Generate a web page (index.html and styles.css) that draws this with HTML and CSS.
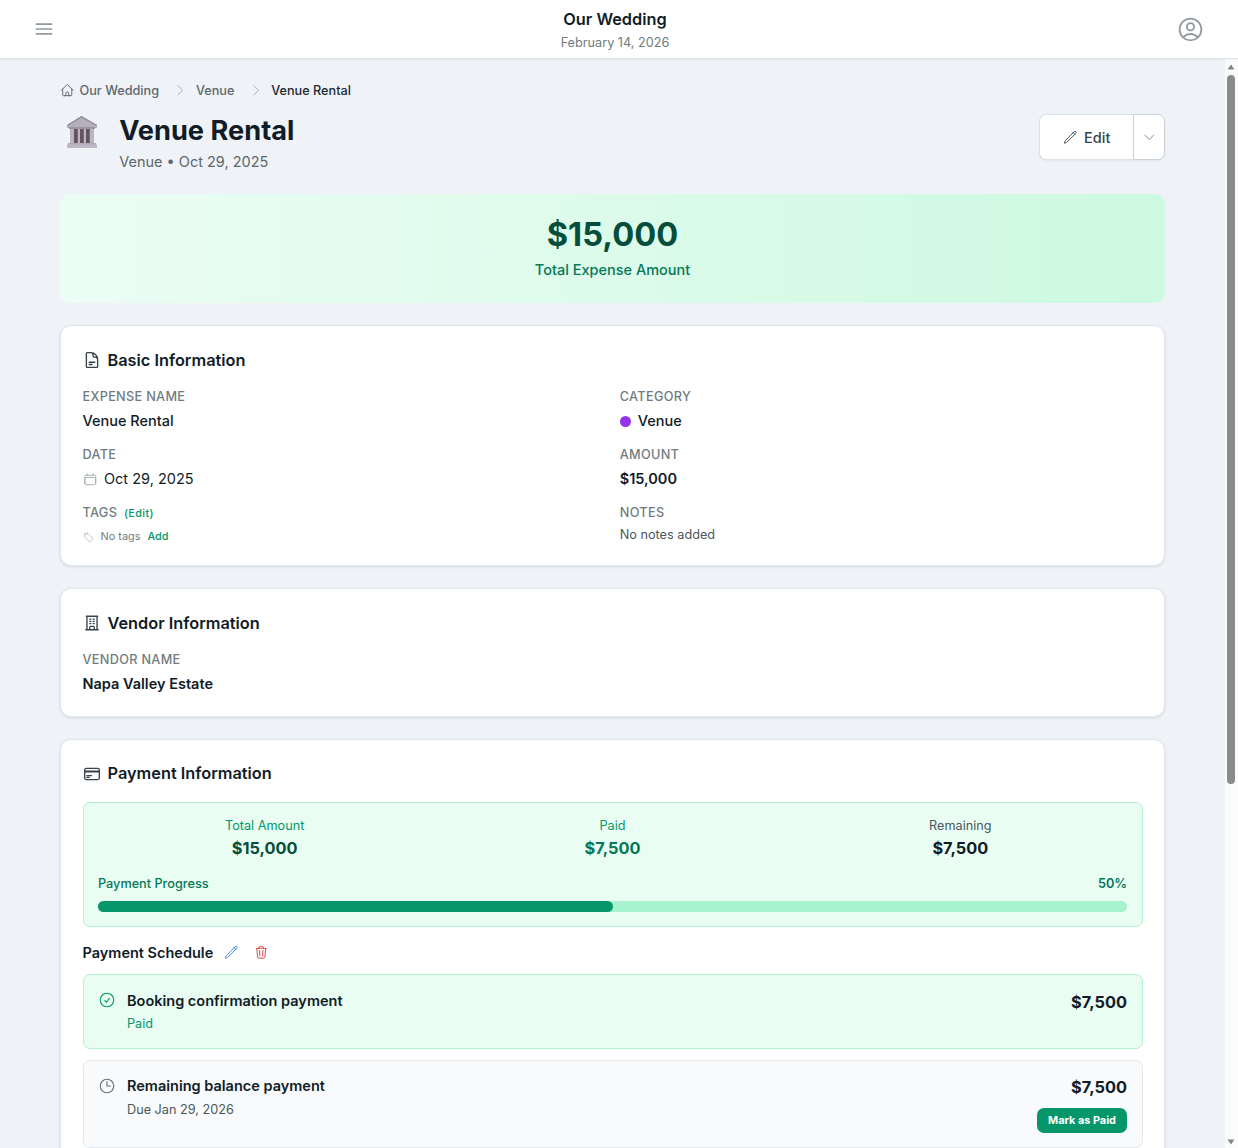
FILE: index.html
```html
<!DOCTYPE html>
<html lang="en">
<head>
    <meta charset="UTF-8">
    <meta name="viewport" content="width=device-width, initial-scale=1.0">
    <title>Venue Rental - Our Wedding</title>
    <link rel="stylesheet" href="styles.css">
</head>
<body>

<header class="topbar">
    <button class="menu-button" aria-label="Menu">
        <svg class="icon" viewBox="0 0 24 24"><path d="M3.75 6.75h16.5M3.75 12h16.5m-16.5 5.25h16.5"/></svg>
    </button>
    <div class="topbar-title">
        <div class="event-name">Our Wedding</div>
        <div class="event-date">February 14, 2026</div>
    </div>
    <button class="user-button" aria-label="Account">
        <svg class="icon" viewBox="0 0 24 24"><path d="M17.982 18.725A7.488 7.488 0 0 0 12 15.75a7.488 7.488 0 0 0-5.982 2.975m11.963 0a9 9 0 1 0-11.963 0m11.963 0A8.966 8.966 0 0 1 12 21a8.966 8.966 0 0 1-5.982-2.275M15 9.75a3 3 0 1 1-6 0 3 3 0 0 1 6 0Z"/></svg>
    </button>
</header>

<div class="layout">
    <main class="content">
        <nav class="breadcrumb">
            <svg class="icon home" viewBox="0 0 24 24"><path d="m2.25 12 8.954-8.955c.44-.439 1.152-.439 1.591 0L21.75 12M4.5 9.75v10.125c0 .621.504 1.125 1.125 1.125H9.75v-4.875c0-.621.504-1.125 1.125-1.125h2.25c.621 0 1.125.504 1.125 1.125V21h4.125c.621 0 1.125-.504 1.125-1.125V9.75M8.25 21h8.25"/></svg>
            <a>Our Wedding</a>
            <svg class="icon chevron" viewBox="0 0 24 24"><path d="m8.25 4.5 7.5 7.5-7.5 7.5"/></svg>
            <a>Venue</a>
            <svg class="icon chevron" viewBox="0 0 24 24"><path d="m8.25 4.5 7.5 7.5-7.5 7.5"/></svg>
            <span class="current">Venue Rental</span>
        </nav>

        <div class="page-header">
            <svg class="category-icon" viewBox="0 0 32 34">
                <path fill="#b5b0bc" d="M1 10 15.5 1 31 10v3H1z"/>
                <path fill="#8f8896" d="M1 10 15.5 1 31 10l-1 .8L15.5 2.6 2 10.8z"/>
                <path fill="#9c95a4" d="M3 12h26v2H3z"/>
                <path fill="#8c8292" d="M4 14h24v15H4z"/>
                <path fill="#65535f" d="M8 14h3.5v15H8zM14 14h3.5v15H14zM20 14h3.5v15H20z"/>
                <path fill="#bbb5c3" d="M4 14h4v15H4zM12 14h2v15h-2zM18 14h2v15h-2zM24 14h4v15h-4z"/>
                <path fill="#b0aab8" d="M2 28h28v2H2z"/>
                <path fill="#bdb8c4" d="M1 29.5h30V33H1z"/>
            </svg>
            <div class="page-heading">
                <h1>Venue Rental</h1>
                <p>Venue • Oct 29, 2025</p>
            </div>
            <div class="button-group">
                <button class="edit-button">
                    <svg class="icon" viewBox="0 0 24 24"><path d="m16.862 4.487 1.687-1.688a1.875 1.875 0 1 1 2.652 2.652L6.832 19.82a4.5 4.5 0 0 1-1.897 1.13l-2.685.8.8-2.685a4.5 4.5 0 0 1 1.13-1.897L16.863 4.487Zm0 0L19.5 7.125"/></svg>
                    Edit
                </button>
                <button class="more-button" aria-label="More actions">
                    <svg class="icon" viewBox="0 0 24 24"><path d="m19.5 8.25-7.5 7.5-7.5-7.5"/></svg>
                </button>
            </div>
        </div>

        <section class="total-banner">
            <div class="total-amount">$15,000</div>
            <div class="total-label">Total Expense Amount</div>
        </section>

        <!-- Basic information -->
        <section class="card">
            <h2>
                <svg class="icon" viewBox="0 0 24 24"><path d="M19.5 14.25v-2.625a3.375 3.375 0 0 0-3.375-3.375h-1.5A1.125 1.125 0 0 1 13.5 7.125v-1.5a3.375 3.375 0 0 0-3.375-3.375H8.25m0 12.75h7.5m-7.5 3H12M10.5 2.25H5.625c-.621 0-1.125.504-1.125 1.125v17.25c0 .621.504 1.125 1.125 1.125h12.75c.621 0 1.125-.504 1.125-1.125V11.25a9 9 0 0 0-9-9Z"/></svg>
                Basic Information
            </h2>
            <div class="fields">
                <div>
                    <div class="label">Expense Name</div>
                    <div class="value medium">Venue Rental</div>
                </div>
                <div>
                    <div class="label">Category</div>
                    <div class="value medium"><span class="dot"></span>Venue</div>
                </div>
                <div>
                    <div class="label">Date</div>
                    <div class="value">
                        <svg class="icon calendar" viewBox="0 0 24 24"><path d="M6.75 3v2.25M17.25 3v2.25M3 18.75V7.5a2.25 2.25 0 0 1 2.25-2.25h13.5A2.25 2.25 0 0 1 21 7.5v11.25m-18 0A2.25 2.25 0 0 0 5.25 21h13.5A2.25 2.25 0 0 0 21 18.75m-18 0v-7.5A2.25 2.25 0 0 1 5.25 9h13.5A2.25 2.25 0 0 1 21 11.25v7.5"/></svg>
                        Oct 29, 2025
                    </div>
                </div>
                <div>
                    <div class="label">Amount</div>
                    <div class="value semibold">$15,000</div>
                </div>
                <div>
                    <div class="label">Tags <a class="tag-edit">(Edit)</a></div>
                    <div class="tags">
                        <svg class="icon" viewBox="0 0 24 24"><path d="M9.568 3H5.25A2.25 2.25 0 0 0 3 5.25v4.318c0 .597.237 1.17.659 1.591l9.581 9.581c.699.699 1.78.872 2.607.33a18.095 18.095 0 0 0 5.223-5.223c.542-.827.369-1.908-.33-2.607L11.16 3.66A2.25 2.25 0 0 0 9.568 3Z"/><path d="M6 6h.008v.008H6V6Z"/></svg>
                        <span>No tags</span>
                        <a>Add</a>
                    </div>
                </div>
                <div>
                    <div class="label">Notes</div>
                    <div class="notes">No notes added</div>
                </div>
            </div>
        </section>

        <!-- Vendor information -->
        <section class="card">
            <h2>
                <svg class="icon" viewBox="0 0 24 24"><path d="M3.75 21h16.5M4.5 3h15M5.25 3v18m13.5-18v18M9 6.75h1.5m-1.5 3h1.5m-1.5 3h1.5m3-6H15m-1.5 3H15m-1.5 3H15M9 21v-3.375c0-.621.504-1.125 1.125-1.125h3.75c.621 0 1.125.504 1.125 1.125V21"/></svg>
                Vendor Information
            </h2>
            <div class="label">Vendor Name</div>
            <div class="value semibold">Napa Valley Estate</div>
        </section>

        <!-- Payment information -->
        <section class="card">
            <h2>
                <svg class="icon" viewBox="0 0 24 24"><path d="M2.25 8.25h19.5M2.25 9h19.5m-16.5 5.25h6m-6 2.25h3m-3.75 3h15a2.25 2.25 0 0 0 2.25-2.25V6.75A2.25 2.25 0 0 0 19.5 4.5h-15a2.25 2.25 0 0 0-2.25 2.25v10.5A2.25 2.25 0 0 0 4.5 19.5Z"/></svg>
                Payment Information
            </h2>

            <div class="summary">
                <div class="summary-grid">
                    <div class="stat total">
                        <div class="stat-label">Total Amount</div>
                        <div class="stat-value">$15,000</div>
                    </div>
                    <div class="stat paid">
                        <div class="stat-label">Paid</div>
                        <div class="stat-value">$7,500</div>
                    </div>
                    <div class="stat remaining">
                        <div class="stat-label">Remaining</div>
                        <div class="stat-value">$7,500</div>
                    </div>
                </div>
                <div class="progress-header">
                    <span>Payment Progress</span>
                    <span class="progress-percent">50%</span>
                </div>
                <div class="progress-bar">
                    <div class="progress-fill" style="width: 50%"></div>
                </div>
            </div>

            <div class="schedule-header">
                <h3>Payment Schedule</h3>
                <svg class="icon pencil" viewBox="0 0 24 24"><path d="m16.862 4.487 1.687-1.688a1.875 1.875 0 1 1 2.652 2.652L6.832 19.82a4.5 4.5 0 0 1-1.897 1.13l-2.685.8.8-2.685a4.5 4.5 0 0 1 1.13-1.897L16.863 4.487Zm0 0L19.5 7.125"/></svg>
                <svg class="icon trash" viewBox="0 0 24 24"><path d="m14.74 9-.346 9m-4.788 0L9.26 9m9.968-3.21c.342.052.682.107 1.022.166m-1.022-.165L18.16 19.673a2.25 2.25 0 0 1-2.244 2.077H8.084a2.25 2.25 0 0 1-2.244-2.077L4.772 5.79m14.456 0a48.108 48.108 0 0 0-3.478-.397m-12 .562c.34-.059.68-.114 1.022-.165m0 0a48.11 48.11 0 0 1 3.478-.397m7.5 0v-.916c0-1.18-.91-2.164-2.09-2.201a51.964 51.964 0 0 0-3.32 0c-1.18.037-2.09 1.022-2.09 2.201v.916m7.5 0a48.667 48.667 0 0 0-7.5 0"/></svg>
            </div>

            <div class="payment done">
                <svg class="icon" viewBox="0 0 24 24"><path d="M9 12.75 11.25 15 15 9.75M21 12a9 9 0 1 1-18 0 9 9 0 0 1 18 0Z"/></svg>
                <div class="payment-info">
                    <div class="payment-name">Booking confirmation payment</div>
                    <div class="payment-status">Paid</div>
                </div>
                <div class="payment-side">
                    <div class="payment-amount">$7,500</div>
                </div>
            </div>

            <div class="payment">
                <svg class="icon" viewBox="0 0 24 24"><path d="M12 6v6h4.5m4.5 0a9 9 0 1 1-18 0 9 9 0 0 1 18 0Z"/></svg>
                <div class="payment-info">
                    <div class="payment-name">Remaining balance payment</div>
                    <div class="payment-status">Due Jan 29, 2026</div>
                </div>
                <div class="payment-side">
                    <div class="payment-amount">$7,500</div>
                    <button class="paid-button">Mark as Paid</button>
                </div>
            </div>
        </section>
    </main>

    <div class="scrollbar">
        <svg class="arrow" viewBox="0 0 8 6"><path d="M4 .5 7.5 5.5h-7z"/></svg>
        <div class="scroll-thumb"></div>
        <svg class="arrow" viewBox="0 0 8 6"><path d="M.5.5h7L4 5.5z"/></svg>
    </div>
</div>

</body>
</html>
```
FILE: styles.css
```css
html {
    font-size: 14.51px;
}

* {
    box-sizing: border-box;
}

body {
    margin: 0;
    height: 100vh;
    display: flex;
    flex-direction: column;
    overflow: hidden;
    font-family: Inter, sans-serif;
    font-size: 1rem;
    line-height: 1.5rem;
    color: #111c27;
    background-color: #eff3f7;
}

h1, h2, h3, p {
    margin: 0;
}

button {
    font-family: inherit;
    cursor: pointer;
    padding: 0;
}

.icon {
    fill: none;
    stroke: currentColor;
    stroke-width: 1.5;
    stroke-linecap: round;
    stroke-linejoin: round;
    flex-shrink: 0;
}

/* Top bar */
.topbar {
    display: flex;
    align-items: center;
    justify-content: space-between;
    height: 59px;
    flex-shrink: 0;
    padding: 0 29px;
    background-color: #fff;
    border-bottom: 1px solid #e1e6ea;
    box-shadow: 0 1px 2px rgba(0, 0, 0, 0.05);
    z-index: 1;
}

.menu-button,
.user-button {
    display: flex;
    align-items: center;
    justify-content: center;
    border: none;
    background: none;
    color: #929a9f;
}

.menu-button {
    width: 29px;
    height: 29px;
}

.menu-button .icon {
    width: 22px;
    height: 22px;
    stroke-width: 1.9;
}

.user-button {
    width: 37px;
    height: 37px;
}

.user-button .icon {
    width: 29px;
    height: 29px;
}

.topbar-title {
    text-align: center;
    padding-top: 1px;
}

.event-name {
    font-size: 1.125rem;
    line-height: 1.75rem;
    font-weight: 600;
}

.event-date {
    padding-top: 1px;
    font-size: 0.875rem;
    line-height: 1.25rem;
    color: #717c80;
}

/* Layout */
.layout {
    flex: 1;
    min-height: 0;
    display: flex;
}

.content {
    flex: 1;
    min-width: 0;
    padding: 22px 60px 0;
    overflow: hidden;
}

.scrollbar {
    width: 13px;
    display: flex;
    flex-direction: column;
    align-items: flex-start;
    padding: 5px 0 3px 2px;
    background-color: #fbfbfb;
}

.arrow {
    width: 8px;
    height: 6px;
    fill: #858585;
}

.scroll-thumb {
    width: 8px;
    height: 709px;
    margin: 5px 0 auto;
    border-radius: 4px;
    background-color: #8b8b8b;
}

/* Page header */
.breadcrumb {
    display: flex;
    align-items: center;
    height: 19px;
    font-size: 0.875rem;
    font-weight: 500;
    color: #5c676c;
}

.breadcrumb .home {
    width: 14.5px;
    height: 14.5px;
    margin-right: 5px;
}

.breadcrumb .chevron {
    width: 14.5px;
    height: 14.5px;
    margin: 0 8px 0 14.3px;
    color: #a0a9ae;
}

.breadcrumb .current {
    color: #1c2932;
}

.page-header {
    display: flex;
    align-items: flex-start;
    padding-top: 14px;
    height: 94px;
}

.category-icon {
    width: 32px;
    height: 34px;
    margin: 1px 21.2px 0 6px;
}

.page-heading {
    flex: 1;
}

.page-heading h1 {
    padding-top: 1px;
    font-size: 1.875rem;
    line-height: 2.25rem;
    font-weight: 700;
}

.page-heading p {
    margin-top: 0.2rem;
    color: #5c676c;
}

.button-group {
    display: flex;
    height: 46px;
}

.edit-button,
.more-button {
    display: flex;
    align-items: center;
    justify-content: center;
    border: 1px solid #dce1e4;
    background-color: #fff;
    box-shadow: 0 1px 2px rgba(0, 0, 0, 0.05);
}

.edit-button {
    width: 94px;
    gap: 7px;
    border-right: none;
    border-radius: 7px 0 0 7px;
    font-size: 1rem;
    font-weight: 500;
    color: #36444d;
}

.edit-button .icon,
.more-button .icon {
    width: 14.5px;
    height: 14.5px;
}

.more-button {
    width: 32px;
    border-color: #cbd1d5;
    border-radius: 0 7px 7px 0;
    color: #7b858a;
}

.total-banner {
    height: 109px;
    margin-bottom: 22px;
    padding: 1.5rem;
    border-radius: 11px;
    background: linear-gradient(to right, #ecfdf5, #cdf9e0);
    text-align: center;
}

.total-amount {
    font-size: 2.25rem;
    line-height: 2.5rem;
    font-weight: 700;
    color: #064e3b;
}

.total-label {
    margin-top: 0.5rem;
    font-weight: 500;
    color: #047857;
}

/* Cards */
.card {
    margin-bottom: 22px;
    padding: 21.5px 21.5px 20.5px;
    border: 1px solid #e1e6eb;
    border-radius: 11px;
    background-color: #fff;
    box-shadow: 0 1px 3px rgba(0, 0, 0, 0.1);
}

.card h2 {
    display: flex;
    align-items: center;
    margin-bottom: 15.5px;
    font-size: 1.125rem;
    line-height: 1.75rem;
    font-weight: 600;
}

.card h2 .icon {
    width: 18px;
    height: 18px;
    margin-right: 7px;
    stroke-width: 1.8;
    color: #36434c;
}

.fields {
    display: grid;
    grid-template-columns: 1fr 1fr;
    gap: 1rem;
}

.label {
    font-size: 0.875rem;
    line-height: 1.25rem;
    font-weight: 500;
    letter-spacing: 0.025em;
    text-transform: uppercase;
    color: #717c80;
}

.value {
    display: flex;
    align-items: center;
    margin-top: 0.25rem;
}

.medium {
    font-weight: 500;
}

.semibold {
    font-weight: 600;
}

.dot {
    width: 11px;
    height: 11px;
    margin-right: 7px;
    border-radius: 50%;
    background-color: #9333ea;
}

.calendar {
    width: 14.5px;
    height: 14.5px;
    margin-right: 7px;
    color: #a0a9ae;
}

.tag-edit {
    margin-left: 3px;
    font-size: 0.75rem;
    line-height: 1;
    text-transform: none;
    letter-spacing: 0.035em;
    color: #059669;
}

.tags {
    display: flex;
    align-items: center;
    height: 15px;
    margin-top: 7px;
    font-size: 0.75rem;
    color: #717c80;
}

.tags .icon {
    width: 11px;
    height: 11px;
    margin-right: 7px;
    color: #a0a9ae;
}

.tags a {
    margin-left: 7px;
    font-weight: 500;
    color: #059669;
}

.notes {
    margin-top: 0.25rem;
    font-size: 0.875rem;
    line-height: 1.25rem;
    color: #4b575d;
}

/* Payment summary */
.summary {
    padding: 1rem;
    border: 1px solid #b4efcf;
    border-radius: 7px;
    background-color: #e9fdf3;
}

.summary-grid {
    display: grid;
    grid-template-columns: repeat(3, 1fr);
    gap: 1rem;
    margin-bottom: 1rem;
    text-align: center;
}

.stat-label {
    font-size: 0.875rem;
    line-height: 1.25rem;
    color: #059669;
}

.stat-value {
    font-size: 1.125rem;
    line-height: 1.75rem;
    font-weight: 700;
}

.total .stat-value {
    color: #064e3b;
}

.paid .stat-value {
    color: #047857;
}

.remaining .stat-label {
    color: #4b575d;
}

.progress-header {
    display: flex;
    justify-content: space-between;
    margin-bottom: 0.5rem;
    font-size: 0.875rem;
    line-height: 1.25rem;
    font-weight: 500;
    color: #047857;
}

.progress-percent {
    font-weight: 600;
}

.progress-bar {
    height: 11px;
    border-radius: 6px;
    background-color: #a7f3d0;
}

.progress-fill {
    height: 100%;
    border-radius: 6px;
    background-color: #059669;
}

/* Payment schedule */
.schedule-header {
    display: flex;
    align-items: center;
    margin: 1rem 0 0.75rem;
}

.schedule-header h3 {
    font-size: 1rem;
    font-weight: 600;
}

.schedule-header .icon {
    width: 14.5px;
    height: 14.5px;
}

.pencil {
    margin: 0 15px 0 11px;
    color: #3b82f6;
}

.trash {
    color: #dc3434;
}

.payment {
    display: flex;
    align-items: flex-start;
    margin-bottom: 11px;
    padding: 1rem;
    border: 1px solid #e5e9ed;
    border-radius: 7px;
    background-color: #f8fafb;
}

.payment .icon {
    width: 18px;
    height: 18px;
    margin: 1.5px 11px 0 0;
    color: #66727a;
}

.payment-info {
    flex: 1;
}

.payment-name {
    font-weight: 600;
}

.payment-status {
    margin-top: 3.5px;
    font-size: 0.875rem;
    line-height: 1.25rem;
    color: #4b575d;
}

.payment-side {
    display: flex;
    flex-direction: column;
    align-items: flex-end;
}

.payment-amount {
    font-size: 1.125rem;
    line-height: 1.75rem;
    font-weight: 700;
}

.done {
    border-color: #b4efcf;
    background-color: #e9fdf3;
}

.done .icon,
.done .payment-status {
    color: #059669;
}

.paid-button {
    width: 90px;
    height: 25px;
    margin-top: 7px;
    border: none;
    border-radius: 7px;
    background-color: #059669;
    color: #fff;
    font-size: 0.75rem;
    font-weight: 700;
}
```
